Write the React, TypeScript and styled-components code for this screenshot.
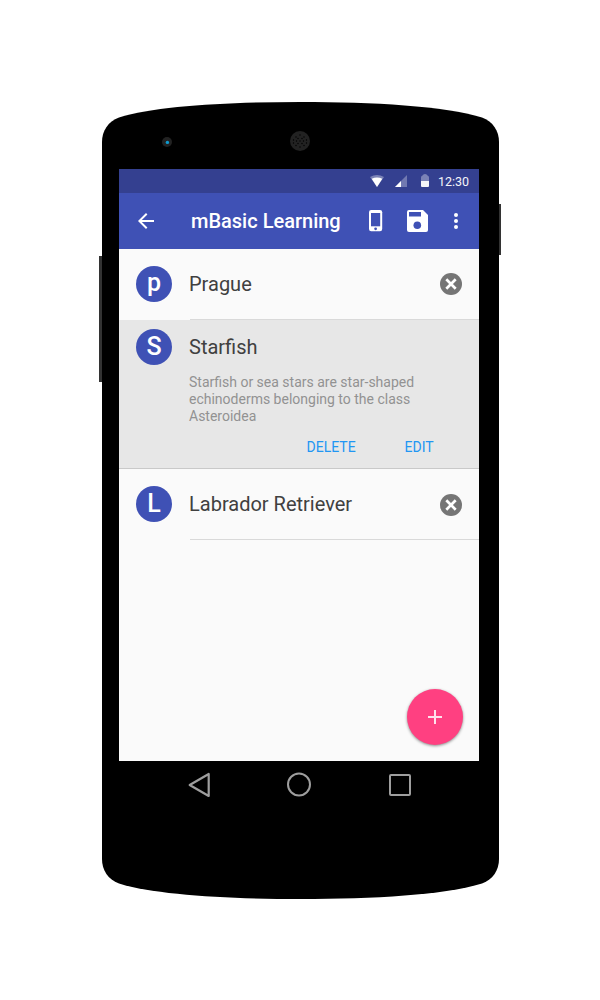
import React from 'react';
import styled, { createGlobalStyle } from 'styled-components';

const GlobalStyle = createGlobalStyle`
  *, *::before, *::after { box-sizing: border-box; }
  body { margin: 0; background: #fff; font-family: Roboto, "Liberation Sans", sans-serif; }
  button { border: 0; padding: 0; background: none; font: inherit; color: inherit; }
  svg { display: block; }
`;

const Stage = styled.main`
  width: 600px;
  height: 1000px;
  padding: 102px 0 0 102px;
  overflow: hidden;
`;

const Phone = styled.div`
  position: relative;
  width: 397px;
  height: 797px;
  padding: 0 20px 0 17px;
  display: flex;
  flex-direction: column;
`;

const Shell = styled.svg`
  position: absolute;
  top: 0;
  left: -3px;
  z-index: -1;
`;

const TopBezel = styled.div`
  height: 67px;
  display: flex;
  align-items: center;
  padding: 11px 0 0 43px;
  gap: 118px;
`;

const Screen = styled.section`
  position: relative;
  width: 360px;
  height: 592px;
  background: #fafafa;
  overflow: hidden;
`;

const StatusBar = styled.div`
  height: 24px;
  background: #344090;
  color: #fff;
  display: flex;
  justify-content: flex-end;
  padding-right: 9px;
`;

const Clock = styled.span`
  width: 32px;
  margin-left: 6px;
  font-size: 12.5px;
  line-height: 25px;
  white-space: nowrap;
  opacity: 0.95;
`;

const AppBar = styled.header`
  height: 56px;
  background: #3f51b5;
  color: #fff;
  display: flex;
  align-items: center;
  padding: 0 11px 0 15px;
`;

const Title = styled.h1`
  margin: 0 0 0 33px;
  width: 165px;
  font-size: 20px;
  font-weight: 500;
  line-height: 24px;
  white-space: nowrap;
`;

const BarButton = styled.button<{ $gap?: number }>`
  width: 24px;
  height: 24px;
  flex: none;
  margin-left: ${(p) => p.$gap ?? 0}px;
`;

const Row = styled.article<{ $open?: boolean }>`
  height: ${(p) => (p.$open ? 149 : 71)}px;
  padding: ${(p) => (p.$open ? 9 : 17)}px 0 0 17px;
  display: flex;
  align-items: flex-start;
  background: ${(p) => (p.$open ? '#e7e7e7' : 'transparent')};
  border-bottom: ${(p) => (p.$open ? '1px solid #c9c9c9' : '0')};
`;

const Avatar = styled.span<{ $lift?: number }>`
  width: 36px;
  height: 36px;
  flex: none;
  border-radius: 50%;
  background: #3f51b5;
  color: #fff;
  font-size: 25px;
  font-weight: 500;
  text-align: center;
  line-height: ${(p) => 36 - (p.$lift ?? 0)}px;
`;

const RowBody = styled.div<{ $open?: boolean }>`
  flex: 1;
  margin-left: 18px;
  height: ${(p) => (p.$open ? 'auto' : '54px')};
  border-bottom: ${(p) => (p.$open ? '0' : '1px solid #d9d9d9')};
  display: flex;
  justify-content: space-between;
  align-items: flex-start;
  flex-direction: ${(p) => (p.$open ? 'column' : 'row')};
  padding-right: 17px;
`;

const Name = styled.h2`
  margin: 0 0 0 -1px;
  font-size: 20px;
  font-weight: 400;
  line-height: 36px;
  color: #404040;
  white-space: nowrap;
`;

const Remove = styled.button<{ $top: number }>`
  margin-top: ${(p) => p.$top}px;
  width: 22px;
  height: 22px;
`;

const Details = styled.p`
  margin: 9px 0 0 -1px;
  width: 240px;
  font-size: 14px;
  line-height: 17px;
  color: #929292;
  white-space: nowrap;
`;

const Actions = styled.div`
  display: flex;
  gap: 49px;
  margin: 14px 0 0 116.5px;
`;

const Action = styled.button`
  color: #2196f3;
  font-size: 14px;
  line-height: 16px;
`;

const Fab = styled.button`
  position: absolute;
  right: 16px;
  bottom: 16px;
  width: 56px;
  height: 56px;
  border-radius: 50%;
  background: #ff4081;
  box-shadow: 0 1px 3px rgba(0, 0, 0, 0.45);
  display: grid;
  place-items: center;
`;

const NavBar = styled.nav`
  height: 48px;
  display: flex;
  align-items: center;
  padding: 0 67px 0 69px;
  justify-content: space-between;
`;

const CloseIcon = () => (
  <svg width="22" height="22" viewBox="0 0 22 22">
    <circle cx="11" cy="11" r="11" fill="#757575" />
    <path d="M6.300 6.300 15.700 15.700M15.700 6.300 6.300 15.700" stroke="#fff" strokeWidth="2.700" />
  </svg>
);

const SPEAKER_DOTS: [number, number][] = [
  [10, 4], [6, 6], [14, 6], [8, 7.5], [12, 7.5], [3.5, 9], [16.5, 9], [6.5, 10], [13.5, 10], [10, 10],
  [3.5, 12], [16.5, 12], [8, 12.5], [12, 12.5], [6, 14.5], [14, 14.5], [10, 16],
];

export default function App() {
  return (
    <>
      <GlobalStyle />
      <Stage>
        <Phone>
          <Shell width="402" height="797" viewBox="-3 0 402 797">
            <rect x="-3" y="154" width="5" height="126" fill="#333" />
            <rect x="395" y="102" width="4" height="51" fill="#333" />
            <path d="M0 40C0 29 6 19.5 17 15.5C54 4 126 0 198.5 0S343 4 380 15.5C391 19.5 397 29 397 40V757C397 768 391 777.500 380 781.500C343 793 271 797 198.500 797S54 793 17 781.500C6 777.500 0 768 0 757Z" />
          </Shell>
          <TopBezel>
            <svg width="10" height="12" viewBox="0 0 10 12">
              <circle cx="5" cy="7" r="5" fill="#222" />
              <circle cx="5.400" cy="7.400" r="1.700" fill="#0d9bd0" />
            </svg>
            <svg width="20" height="20" viewBox="0 0 20 20">
              <circle cx="10" cy="10" r="10" fill="#222" />
              {SPEAKER_DOTS.map(([x, y]) => (
                <circle key={`${x}-${y}`} cx={x} cy={y} r="0.7" fill="#000" />
              ))}
            </svg>
          </TopBezel>
          <Screen>
            <StatusBar>
              <svg width="62" height="24" viewBox="0 0 62 24" fill="#fff">
                <path d="M0 8Q7 4 14 8L7 18Z" opacity=".35" />
                <path d="M1.700 9.700Q7 7.300 12.300 9.700L7 18Z" />
                <path d="M37 6V18H25Z" opacity=".3" />
                <path d="M31 12V18H25Z" />
                <path d="M51 12V8.500Q51 7 52.500 6.500Q53 5 55 5T57.500 6.500Q59 7 59 8.500V12Z" opacity=".35" />
                <path d="M51 12H59V17Q59 18 58 18H52Q51 18 51 17Z" opacity=".95" />
              </svg>
              <Clock>12:30</Clock>
            </StatusBar>
            <AppBar>
              <BarButton aria-label="Back">
                <svg width="24" height="24" viewBox="0 0 24 24" fill="#fff">
                  <path d="M20 11H7.830l5.590-5.590L12 4l-8 8 8 8 1.410-1.410L7.830 13H20z" />
                </svg>
              </BarButton>
              <Title>mBasic Learning</Title>
              <BarButton $gap={8} aria-label="Device">
                <svg width="24" height="24" viewBox="0 0 24 24">
                  <rect x="5" y="1" width="13.200" height="21.300" rx="2.200" fill="#fff" />
                  <rect x="7" y="4" width="9.200" height="13.300" fill="#3f51b5" />
                  <circle cx="11.600" cy="19.800" r="1.400" fill="#3f51b5" />
                </svg>
              </BarButton>
              <BarButton $gap={17} aria-label="Save">
                <svg width="24" height="24" viewBox="0 0 24 24">
                  <path d="M4 1H18L23 6V21Q23 23 21 23H4Q2 23 2 21V3Q2 1 4 1Z" fill="#fff" />
                  <path d="M4 3H16V7.500H4Z" fill="#3f51b5" />
                  <circle cx="12.300" cy="16.200" r="3.800" fill="#3f51b5" />
                </svg>
              </BarButton>
              <BarButton $gap={15} aria-label="More">
                <svg width="24" height="24" viewBox="0 0 24 24" fill="#fff">
                  <circle cx="12" cy="6" r="2" />
                  <circle cx="12" cy="12" r="2" />
                  <circle cx="12" cy="18" r="2" />
                </svg>
              </BarButton>
            </AppBar>
            <Row>
              <Avatar $lift={2}>p</Avatar>
              <RowBody>
                <Name>Prague</Name>
                <Remove $top={7} aria-label="Remove"><CloseIcon /></Remove>
              </RowBody>
            </Row>
            <Row $open>
              <Avatar>S</Avatar>
              <RowBody $open>
                <Name>Starfish</Name>
                <Details>
                  Starfish or sea stars are star-shaped<br />
                  echinoderms belonging to the class<br />
                  Asteroidea
                </Details>
                <Actions>
                  <Action>DELETE</Action>
                  <Action>EDIT</Action>
                </Actions>
              </RowBody>
            </Row>
            <Row>
              <Avatar>L</Avatar>
              <RowBody>
                <Name>Labrador Retriever</Name>
                <Remove $top={8} aria-label="Remove"><CloseIcon /></Remove>
              </RowBody>
            </Row>
            <Fab aria-label="Add">
              <svg width="14" height="14" viewBox="0 0 14 14">
                <path d="M7 0V14M0 7H14" stroke="#fff" strokeWidth="2" opacity=".85" />
              </svg>
            </Fab>
          </Screen>
          <NavBar>
            <svg width="24" height="26" viewBox="0 0 24 26">
              <path d="M20.700 2V24L1.700 13Z" fill="none" stroke="#9e9e9e" strokeWidth="2.200" strokeLinejoin="round" />
            </svg>
            <svg width="26" height="26" viewBox="0 0 26 26">
              <circle cx="12" cy="12.500" r="11" fill="none" stroke="#9e9e9e" strokeWidth="2" />
            </svg>
            <svg width="24" height="24" viewBox="0 0 24 24">
              <rect x="2" y="2" width="20" height="20" rx="1" fill="none" stroke="#9e9e9e" strokeWidth="2" />
            </svg>
          </NavBar>
        </Phone>
      </Stage>
    </>
  );
}
